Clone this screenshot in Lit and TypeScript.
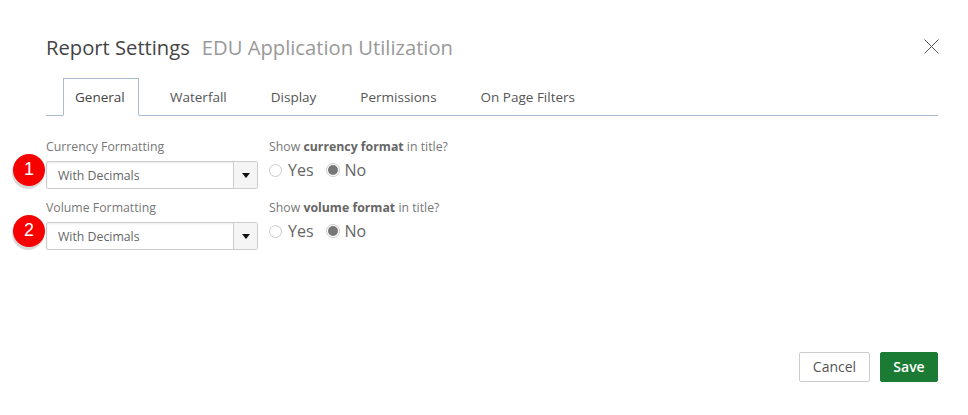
import { LitElement, html, css } from "lit";
import { customElement } from "lit/decorators.js";

@customElement("app-root")
export class AppRoot extends LitElement {
  static styles = css`
    :host { display: block; width: 968px; height: 415px; background: #fff; font-family: "Open Sans", sans-serif; color: #666; overflow: hidden; }
    .modal { box-sizing: border-box; height: 415px; padding: 34px 30px 33px 46px; display: flex; flex-direction: column; }
    .head { display: flex; align-items: center; height: 27px; justify-content: space-between; }
    .title { font-size: 20.2px; color: #444; line-height: 27px; display: flex; gap: 12px; }
    .title span { color: #999; }
    .close { width: 15px; height: 15px; margin-right: -1px; margin-top: -2px; display: block; }
    .tabs { display: flex; margin-top: 17px; height: 37px; border-bottom: 1px solid #a9bdd0; padding-left: 17px; font-size: 13.5px; color: #555; }
    .tab { padding: 0 22px; line-height: 38px; white-space: nowrap; }
    .tab.active { box-sizing: border-box; height: 38px; width: 76px; padding: 0 11px; margin-right: 9px; border: 1px solid #a9bdd0; border-bottom-color: #fff; color: #444; line-height: 37px; }
    .form { display: grid; grid-template-columns: 212px auto; column-gap: 11px; row-gap: 10px; margin-top: 22px; justify-content: start; flex: 1; align-content: start; }
    .field { position: relative; }
    .lbl { font-size: 12.3px; line-height: 18px; height: 18px; color: #777; margin-bottom: 5px; white-space: nowrap; }
    .lbl b { font-weight: 700; color: #666; }
    .select { box-sizing: border-box; height: 28px; border: 1px solid #ccc; border-radius: 2px; display: flex; box-shadow: inset 0 1px 2px rgba(0,0,0,.08); background: #fff; }
    .select .val { flex: 1; font-size: 12.3px; line-height: 27px; padding-left: 11px; color: #666; }
    .select .arrow { width: 23px; border-left: 1px solid #ccc; background: #f5f5f5; display: flex; align-items: center; justify-content: center; }
    .tri { width: 0; height: 0; border-left: 4.5px solid transparent; border-right: 4.5px solid transparent; border-top: 5px solid #111; }
    .badge { position: absolute; left: -33px; top: 16px; width: 32px; height: 32px; border-radius: 50%; background: #f80000; color: #fff; font-family: "Liberation Sans", sans-serif; font-size: 18px; line-height: 31px; text-align: center; box-shadow: -1px 3px 1px #d8d8d8; }
    .radios { display: flex; align-items: center; height: 28px; margin-top: -5px; font-size: 16px; color: #666; }
    .opt { display: flex; align-items: center; gap: 6px; margin-right: 14px; }
    .opt + .opt { margin-left: -2px; gap: 5px; }
    .radio { box-sizing: border-box; width: 13px; height: 13px; border: 1px solid #ccc; border-radius: 50%; background: #fff; display: flex; align-items: center; justify-content: center; }
    .radio.on { width: 14px; height: 14px; }
    .radio.on::after { content: ""; width: 10px; height: 10px; border-radius: 50%; background: #777; }
    .foot { display: flex; justify-content: flex-end; gap: 10px; }
    .btn { box-sizing: border-box; height: 30px; font-size: 14px; line-height: 28px; text-align: center; border-radius: 2px; border: 1px solid #ccc; background: #fff; color: #555; }
    .cancel { width: 71px; }
    .save { width: 58px; background: #1b7a34; border-color: #1b7a34; color: #fff; font-weight: 600; }
  `;

  private row(n: number, label: string, word: string) {
    return html`
      <div class="field">
        <div class="lbl">${label}</div>
        <div class="select"><div class="val">With Decimals</div><div class="arrow"><div class="tri"></div></div></div>
        <div class="badge">${n}</div>
      </div>
      <div>
        <div class="lbl">Show <b>${word} format</b> in title?</div>
        <div class="radios">
          <div class="opt"><div class="radio"></div>Yes</div>
          <div class="opt"><div class="radio on"></div>No</div>
        </div>
      </div>`;
  }

  render() {
    return html`
      <div class="modal">
        <div class="head">
          <div class="title">Report Settings <span>EDU Application Utilization</span></div>
          <svg class="close" viewBox="0 0 15 15"><path d="M.5.5l14 14M14.5.5l-14 14" stroke="#555" stroke-width="1" fill="none"/></svg>
        </div>
        <div class="tabs">
          <div class="tab active">General</div>
          <div class="tab">Waterfall</div>
          <div class="tab">Display</div>
          <div class="tab">Permissions</div>
          <div class="tab">On Page Filters</div>
        </div>
        <div class="form">
          ${this.row(1, "Currency Formatting", "currency")}
          ${this.row(2, "Volume Formatting", "volume")}
        </div>
        <div class="foot">
          <div class="btn cancel">Cancel</div>
          <div class="btn save">Save</div>
        </div>
      </div>`;
  }
}
